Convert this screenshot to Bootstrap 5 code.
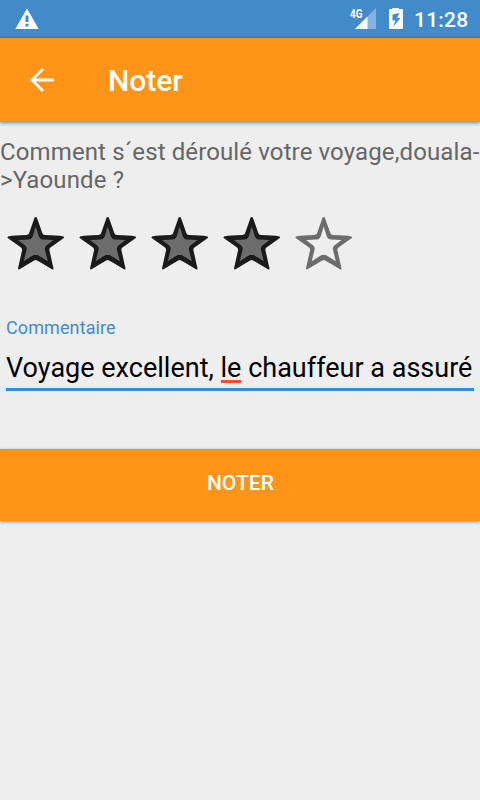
<!DOCTYPE html>
<html lang="fr">
<head>
<meta charset="utf-8">
<meta name="viewport" content="width=device-width, initial-scale=1">
<title>Noter</title>
<link href="https://cdn.jsdelivr.net/npm/bootstrap@5.3.0/dist/css/bootstrap.min.css" rel="stylesheet">
<style>
body{font-family:Roboto,sans-serif;background:#eee;overflow:hidden;min-height:100vh}
svg{display:block;flex:none}
.status-bar{height:38px;background:#428bca;padding:0 12px 0 15px}
.signal{overflow:visible}
.clock{font-size:21px;line-height:38px;font-weight:500;width:54px;white-space:nowrap;letter-spacing:.2px;padding-top:1px}
.app-bar{height:84px;background:#ff9419;padding-left:30px;box-shadow:0 1px 4px rgba(0,0,0,.45)}
.app-title{font-size:30px;line-height:36px;font-weight:500;margin-left:53px;padding-top:2px}
.question{font-size:24px;line-height:28px;color:#666;padding-top:16px;white-space:nowrap;letter-spacing:.12px}
.stars{height:72px;margin-top:11px}
.comment-label{font-size:18px;line-height:22px;color:#428bca;letter-spacing:.1px}
.comment{margin:40px 6px 0}
.comment-text{font-size:27px;line-height:32px;color:#000;height:41px;border-bottom:3px solid #428bca;padding-top:2px;margin-top:11px;white-space:nowrap;letter-spacing:.01px}
.typo{border-bottom:3px solid #ff4444;display:inline-block;height:31px}
.btn-rate{height:72px;margin-top:58px;background:#ff9419;font-size:21px;line-height:24px;font-weight:500;padding:0 0 4px 1px;letter-spacing:.1px;box-shadow:0 1px 3px rgba(0,0,0,.4)}
.btn-rate:hover{background:#ff9419}
</style>
<script src="https://cdn.jsdelivr.net/npm/bootstrap@5.3.0/dist/js/bootstrap.bundle.min.js"></script>
</head>
<body>
<svg width="0" height="0" class="position-absolute" aria-hidden="true">
  <defs>
    <path id="star-rim" fill-rule="evenodd" d="M35.700 12Q34.700 12 34.400 13L29.200 28Q28.500 30 26.500 30.100Q15 30.200 8 31.500Q7 32.300 8 33.300L20.700 42.300Q22.500 43.500 22 45.500L18 63.500Q18 65 19.500 64.300L34.200 55.500Q35.700 54.700 37.200 55.500L52 64.300Q53.500 65 53.500 63.500L49.500 45.500Q49 43.500 50.800 42.300L63.500 33.300Q64.500 32.300 63.500 31.500Q57 30.200 45 30.100Q43 30 42.300 28L37 13Q36.700 12 35.700 12ZM35.700 21.500L38.800 31.500Q40 34.500 43 34.600L53.500 35.100L46.300 40.400Q44.300 42 45 45L47.800 56.200L38.200 50.300Q35.700 49 33.200 50.300L23.700 56.200L26.500 45Q27.200 42 25.200 40.400L18 35.100L28.500 34.600Q31.500 34.500 32.700 31.500Z"/>
    <path id="star-core" d="M35.700 19L40 33L56 34L46 43L49.500 58L35.700 51L22 58L25 43L15 34L31 33Z"/>
  </defs>
</svg>
<header>
  <div class="status-bar d-flex align-items-center text-white">
    <svg width="24" height="22" viewBox="0 0 24 22"><path fill="#fff" fill-rule="evenodd" d="M12 .5L23.700 21H.3ZM10.500 7.500V14H13.500V7.500ZM10.500 15.800V18.500H13.500V15.800Z"/></svg>
    <svg class="signal ms-auto" width="26" height="22" viewBox="0 0 26 22"><path fill="#fff" opacity=".35" d="M26 0V21H5Z"/><path fill="#fff" d="M17.500 8.500V21H5Z"/><text x="0" y="9.500" font-family="Roboto" font-size="12" font-weight="700" fill="#fff" textLength="12.500" lengthAdjust="spacingAndGlyphs">4G</text></svg>
    <svg class="mx-2" width="22" height="22" viewBox="0 0 22 22"><path fill="#fff" fill-rule="evenodd" d="M8.500 -.5H15V1H18Q19 1 19 2V20Q19 21 18 21H6Q5 21 5 20V2Q5 1 6 1H8.500ZM15.500 5L8.500 6.500V12.500H11.500L9 19L16.500 10H13Z"/></svg>
    <div class="clock text-end">11:28</div>
  </div>
  <div class="app-bar d-flex align-items-center text-white">
    <svg width="25" height="24" viewBox="0 0 25 24" fill="none" stroke="#fff" stroke-width="2.800"><path d="M24 12H2M13 1L2 12L13 23"/></svg>
    <div class="app-title">Noter</div>
  </div>
</header>
<main>
  <div class="question">Comment s´est déroulé votre voyage,douala-<br>&gt;Yaounde ?</div>
  <div class="stars d-flex">
    <svg width="72" height="72"><use href="#star-core" fill="#6c6c6c"/><use href="#star-rim" fill="#1a1a1a"/></svg>
    <svg width="72" height="72"><use href="#star-core" fill="#6c6c6c"/><use href="#star-rim" fill="#1a1a1a"/></svg>
    <svg width="72" height="72"><use href="#star-core" fill="#6c6c6c"/><use href="#star-rim" fill="#1a1a1a"/></svg>
    <svg width="72" height="72"><use href="#star-core" fill="#6c6c6c"/><use href="#star-rim" fill="#1a1a1a"/></svg>
    <svg width="72" height="72"><use href="#star-rim" fill="#6c6c6c"/></svg>
  </div>
  <div class="comment">
    <div class="comment-label">Commentaire</div>
    <div class="comment-text">Voyage excellent, <span class="typo">le</span> chauffeur a assuré</div>
  </div>
  <button class="btn btn-rate w-100 border-0 rounded-0 text-white d-flex align-items-center justify-content-center" type="button">NOTER</button>
</main>
</body>
</html>
